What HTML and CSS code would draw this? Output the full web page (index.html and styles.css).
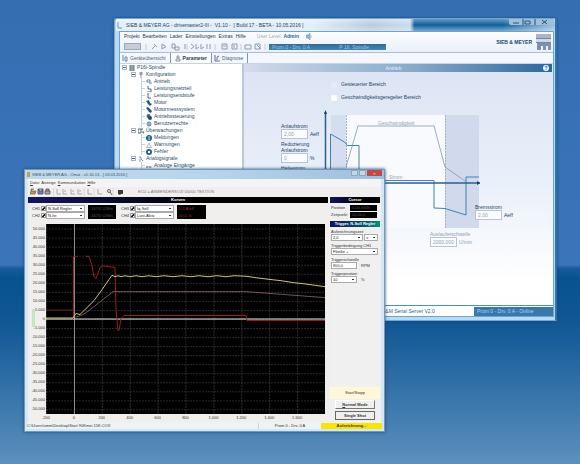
FILE: index.html
```html
<!DOCTYPE html>
<html lang="de">
<head>
<meta charset="utf-8">
<title>SIEB &amp; MEYER drivemaster2</title>
<link rel="stylesheet" href="styles.css">
</head>
<body>
<main class="desktop">

<section class="win back">
  <header class="back-title">
    <svg class="appicon" viewBox="0 0 6 8"><path d="M1 1v6h4" fill="none" stroke="#7796b5"/></svg>
    <h1>SIEB &amp; MEYER AG - drivemaster2-III - &nbsp;V1.10 - &nbsp;[ Build 17 - BETA - 10.05.2016 ]</h1>
    <svg class="back-controls" viewBox="0 0 46 7"><path d="M0 0H45V4Q45 6 42 6H3Q0 6 0 4Z" fill="#9fbfda"/><path d="M4 4h6M16 2h5v3h-5zM14 0v6M26 0v6M33 1l5 4M38 1l-5 4" fill="none" stroke="#24537d"/></svg>
  </header>
  <div class="back-client">
    <div class="back-head">
      <div class="head-left">
        <nav class="menu back-menu"><a href="#">Projekt</a><a href="#">Bearbeiten</a><a href="#">Lader</a><a href="#">Einstellungen</a><a href="#">Extras</a><a href="#">Hilfe</a><span class="level">User Level: <b>Admin</b></span>
          <svg class="sound" viewBox="0 0 6 7"><path d="M0 2h2l2-2v7L2 5H0zM5 2v3" fill="#91b3d0" stroke="#6590b7" stroke-width=".5"/></svg></nav>
        <div class="back-tools">
          <svg viewBox="0 0 142 9"><rect x=".5" y="1.5" width="16" height="6" fill="#c6ccd6" stroke="#9ba9b9"/><path d="M22 2v6M63 2v6M91 2v6M117 2v6M141 2v6" stroke="#c5d0df"/><g fill="none" stroke="#8c9caf"><path d="M28 7l3-3M30 2l3 3M38 2v5l4-2.500zM48 2h3v4h-3zM51 5h4v3h-4zM61 2v5M67 7l3-2.500L67 2M72 2v5l3-2M77 2v5l3-2M83 2v5M86 2v5" /><path d="M98 2h5v5h-5zM99 4h3M108 2h5v5h-5zM110 3v3M121 3h6v4h-6zM131 2h5v5h-5zM133 3l4 4"/></g></svg>
          <p class="connection"><span>Prom 0 - Drv. 0 A</span><span>P 16, Spindle</span></p>
        </div>
      </div>
      <strong class="brand">SIEB &amp; MEYER</strong>
      <svg class="logo" viewBox="0 0 15 17"><path d="M0 0h15v4H0z" fill="#a9b5cc"/><path d="M0 5h15v3H0z" fill="#d0d8e6"/><path d="M1 9h14v7h-3v-4h-2v4H7v-4H5v4H1z" fill="#7f8fae"/><path d="M0 4.500h15M0 8.500h15" stroke="#6f88aa"/></svg>
    </div>
    <nav class="tabs">
      <a href="#"><svg viewBox="0 0 6 7"><path d="M1 0v6M3 2h2v4H3z" fill="none" stroke="#6e88a2"/></svg>Geräteübersicht</a>
      <a href="#" class="active"><svg viewBox="0 0 6 7"><path d="M2 1h2v2H2zM1 4h4v2H1z" fill="none" stroke="#7f91a3"/></svg>Parameter</a>
      <a href="#"><svg viewBox="0 0 6 7"><path d="M1 0v6h5M3 5V2l2-1" fill="none" stroke="#596e91"/></svg>Diagnose</a>
    </nav>
    <div class="back-main">
      <ul class="tree">
        <li class="l0"><i class="box"></i><svg viewBox="0 0 6 6"><path d="M1 0h4v6H1zM1 2h4M1 4h4" fill="#bac5d1" stroke="#637b92"/></svg>P16i-Spindle</li>
        <li class="l1"><i class="box"></i><svg viewBox="0 0 6 6"><path d="M2 0h2v3H2zM3 4v2" fill="#a6b4bf" stroke="#8796a5"/></svg>Konfiguration</li>
        <li class="l2"><svg viewBox="0 0 6 6"><path d="M1 1h3v2H1zM3 4h3" fill="none" stroke="#668aa6"/></svg>Antrieb</li>
        <li class="l2"><svg viewBox="0 0 6 6"><path d="M2 0v3h3v3H1" fill="none" stroke="#436580"/></svg>Leistungsnetzteil</li>
        <li class="l2"><svg viewBox="0 0 6 6"><path d="M2 0v5h3" fill="none" stroke="#436580"/></svg>Leistungsendstufe</li>
        <li class="l2"><svg viewBox="0 0 6 6"><path d="M0 1l3-1 1 3 2 1-2 2-2-2z" fill="#1b5988"/></svg>Motor</li>
        <li class="l2"><svg viewBox="0 0 6 6"><path d="M0 1l2-1 4 4-1 2-2-1z" fill="#2b5775"/></svg>Motormesssystem</li>
        <li class="l2"><svg viewBox="0 0 6 6"><circle cx="2.500" cy="2" r="2" fill="#396b90"/><circle cx="4" cy="4" r="2" fill="#154f7d"/></svg>Antriebssteuerung</li>
        <li class="l2"><svg viewBox="0 0 6 6"><circle cx="3" cy="3" r="2" fill="#c6d9ea" stroke="#5c87aa"/><path d="M3 1v4" stroke="#5c87aa"/></svg>Benutzerrechte</li>
        <li class="l1"><i class="box"></i><svg viewBox="0 0 6 6"><path d="M0 1h3v4H0zM4 0v2M4 4h2v2" fill="none" stroke="#4f6370"/></svg>Überwachungen</li>
        <li class="l2"><svg viewBox="0 0 6 6"><circle cx="3" cy="3" r="3" fill="#1e629b"/><path d="M3 1v4" stroke="#cce2f2"/></svg>Meldungen</li>
        <li class="l2"><svg viewBox="0 0 6 6"><path d="M3 1l2.500 4.500h-5z" fill="#e8eef3" stroke="#8397a7" stroke-width=".6"/></svg>Warnungen</li>
        <li class="l2"><svg viewBox="0 0 6 6"><circle cx="3" cy="3" r="3" fill="#1e629b"/><path d="M2 2l2 2M4 2L2 4" stroke="#fff"/></svg>Fehler</li>
        <li class="l1"><i class="box"></i><svg viewBox="0 0 6 6"><path d="M1 1h2v2l2 2M2 3v3" fill="none" stroke="#8494a3"/></svg>Analogsignale</li>
        <li class="l2"><svg viewBox="0 0 6 6"><path d="M0 4h2M2.500 4h3" stroke="#435a6b"/></svg>Analoge Eingänge</li>
      </ul>
      <section class="panel">
        <h2 class="panel-title"><span>Antrieb</span><button type="button" aria-label="Hilfe">?</button></h2>
        <div class="canvas">
          <svg class="diagram" width="312" height="170" viewBox="0 0 312 170">
            <path d="M87 43h15v113H87z" fill="#d5def0"/><path d="M102 43h99v113h-99z" fill="#f8fafe"/><path d="M201 43h34v113h-34z" fill="#d0daec"/>
            <path d="M102.500 43v70M201.500 43v113" stroke="#a0b4c8" stroke-dasharray="2 1"/>
            <path d="M102 95l12-41h76l11 41 20 14" fill="none" stroke="#8299ad" stroke-width=".8"/>
            <path d="M86.500 110V62l14 8 3 3.500h11.500V108M140 108.500h50V136l11 .5 21 6.500v-38h13" fill="none" stroke="#4480ae"/>
            <path d="M81.500 40v72M81 111h155" stroke="#286090" stroke-width="1.500"/>
            <path d="M80 42l1.500-4L83 42zM233 109l3 2-3 2z" fill="#173f65"/>
          </svg>
          <span class="note speed">Geschwindigkeit</span><span class="note current">Strom</span>
          <label class="opt controlled"><input type="checkbox" class="ghost">Gesteuerter Bereich</label>
          <label class="opt regulated"><input type="checkbox">Geschwindigkeitsgeregelter Bereich</label>
          <div class="fields">
            <div class="field"><label for="start">Anlaufstrom</label><span><input id="start" value="2,00"><em>Aeff</em></span></div>
            <div class="field"><label for="reduce">Reduzierung<br>Anlaufstrom</label><span><input id="reduce" value="0"><em>%</em></span></div>
            <div class="field"><label for="hold">Haltestrom</label><span><input id="hold" value="1,00"></span></div>
          </div>
          <div class="field brake"><label for="brake">Bremsstrom</label><span><input id="brake" value="2,00"><em>Aeff</em></span></div>
          <div class="field coast"><label for="coast">Auslauferschwelle</label><span><input id="coast" value="2000.000"><em>U/min</em></span></div>
        </div>
      </section>
    </div>
    <footer class="back-status"><span>S&amp;M Serial Server V2.0</span><span class="online">Prom 0 - Drv. 0 A - Online</span></footer>
  </div>
</section>

<section class="win front">
  <header class="front-title"><i class="dot"></i><h1>SIEB &amp; MEYER AG - Omat - v1.10.13 - [ 03.03.2016 ]</h1>
    <span class="front-controls"><i></i><i></i><button type="button" aria-label="Schließen">×</button></span></header>
  <div class="front-client">
    <nav class="menu front-menu"><a href="#"><u>D</u>atei</a><a href="#">Anzeige</a><a href="#"><u>K</u>ommunikation</a><a href="#"><u>H</u>ilfe</a></nav>
    <div class="front-tools">
      <svg viewBox="0 0 94 8"><path d="M0 6l1-3h5L5 6zM1 3V1h3" fill="#b59b55" stroke="#665e41" stroke-width=".7"/><path d="M8 1h5v5H8zM9 1v2h3V1" fill="#7b859b" stroke="#3c4559" stroke-width=".8"/><path d="M15 3h5v3h-5zM16 3V1h3v2" fill="#a9a9a9" stroke="#4b4b4b" stroke-width=".8"/><path d="M23.500 0v8M54 0v8M64 0v8M83 0v8" stroke="#d8d8d8"/><path d="M27 1v5h4M33 1v5h4M35 2v2M41 1v5h4M43 2v2M48 1v5h4M50 2v2M58 1v5h4M68 1v5h4" fill="none" stroke="#aaa"/><circle cx="79" cy="3" r="1.500" fill="none" stroke="#646464"/><path d="M80 4l2 3" stroke="#646464"/><path d="M88 2h5v4h-2l-1 1-2-1z" fill="#393939"/></svg>
      <span>ECU = ANWENDERSOZI 00000 TEXTION</span>
    </div>
    <div class="work">
      <section class="plot-side">
        <h2 class="bar">Kurven</h2>
        <div class="channels">
          <div class="channel"><label for="s1">CH1</label><input type="checkbox" checked aria-label="CH1 anzeigen"><select id="s1"><option>N-Soll Regler</option></select><output>-167/0 U/Min</output></div>
          <div class="channel"><label for="s3">CH3</label><input type="checkbox" checked aria-label="CH3 anzeigen"><select id="s3"><option>Iq-Soll</option></select><output class="red">0,0 A/eff</output></div>
          <div class="channel"><label for="s2">CH2</label><input type="checkbox" checked aria-label="CH2 anzeigen"><select id="s2"><option>N-Ist</option></select><output>-167/0 U/Min</output></div>
          <div class="channel"><label for="s4">CH4</label><input type="checkbox" checked aria-label="CH4 anzeigen"><select id="s4"><option>Last-Aktiv</option></select><output class="red">00,0 %</output></div>
        </div>
        <div class="plot">
          <ol class="y-axis"><li>50.000</li><li>45.000</li><li>40.000</li><li>35.000</li><li>30.000</li><li>25.000</li><li>20.000</li><li>15.000</li><li>10.000</li><li>5.000</li><li>0</li><li>-5.000</li><li>-10.000</li><li>-15.000</li><li>-20.000</li><li>-25.000</li><li>-30.000</li><li>-35.000</li><li>-40.000</li><li>-45.000</li><li>-50.000</li></ol>
          <svg class="curves" viewBox="0 0 279 191" preserveAspectRatio="none">
            <defs><pattern id="h" width="279" height="9.090" y="4.600" patternUnits="userSpaceOnUse"><path d="M0 .5h279" stroke="#333" stroke-width=".8" stroke-dasharray="2 1"/></pattern><pattern id="v" width="27.900" height="191" patternUnits="userSpaceOnUse"><path d="M.5 0v191" stroke="#3a3a3a" stroke-width=".8" stroke-dasharray="2 1"/></pattern></defs>
            <path d="M0 0h279v191H0z" fill="#000"/><path d="M0 0h279v191H0z" fill="url(#h)"/><path d="M0 0h279v191H0z" fill="url(#v)"/>
            <path d="M28.500 0v191" stroke="#a9a9a9" stroke-width=".8"/><path d="M0 95.500h279" stroke="#eee"/>
            <g fill="none" stroke-linejoin="round"><path d="M0 86.500h27" stroke="#6b2119"/><path d="M27.500 95V32.500h4M40 32.500h3L46 42 48 53 50 55 54 44 56 42 67 43.500H69L70 86 72 107 73 107 75 95 78 92 80 92H200L201 97 204 97H279" stroke="#9b1f1f"/><path d="M28.500 94L37 91 43 87 53 79 67 68H200L279 74" stroke="#aa7774" stroke-width=".7"/><path d="M0 94.500H27L30 90 34 91 38 87 48 77 56 66 66 51.500 69 53 72 52 75 53 79 52 84 53 90 52 96 53 103 52 110 53 118 52 127 53 136 52 145 53 153 52 162 53 171 52 180 53 188 52 200 52.500 210 54 222 55.500 235 57 248 59 261 60.500 279 63" stroke="#cbc66f"/></g>
          </svg>
          <i class="marker"></i>
          <ol class="x-axis"><li>-200</li><li>0</li><li>200</li><li>400</li><li>600</li><li>800</li><li>1.000</li><li>1.200</li><li>1.400</li><li>1.600</li></ol>
        </div>
      </section>
      <aside class="side">
        <h2 class="bar">Cursor</h2>
        <dl class="cursor"><dt>Position</dt><dd>0,00,000h</dd><dt>Zeitpunkt</dt><dd>00:00,0</dd></dl>
        <h2 class="bar teal">Trigger, N-Soll Regler</h2>
        <form class="trigger">
          <label for="time">Aufzeichnungszeit</label><div class="pair"><select id="time"><option>2,0</option></select><select aria-label="Einheit"><option>s</option></select></div>
          <label for="cond">Triggerbedingung CH1</label><div><select id="cond" class="wide"><option>Flanke +</option></select></div>
          <label for="level">Triggerschwelle</label><div><input id="level" value="800,0"><em>RPM</em></div>
          <label for="pos">Triggerposition</label><div><select id="pos"><option>10</option></select><em>%</em></div>
        </form>
        <div class="start"><p>Start/Stopp</p><button type="button"><u>N</u>ormal Mode</button><button type="button" class="default">Single Shot</button></div>
      </aside>
    </div>
    <footer class="front-status"><span>C:\Users\smm\Desktop\Start 90Kmin 15K.COX</span><span>Prom 0 - Drv. 0 A</span><strong>Aufzeichnung...</strong></footer>
  </div>
</section>
</main>
</body>
</html>
```
FILE: styles.css
```css
* { box-sizing: border-box; }
body { margin: 0; font: 5px/7px "Liberation Sans", sans-serif; color: #234563; }
h1, h2, p, ul, ol, dl, dd { margin: 0; padding: 0; font: inherit; }
ul, ol { list-style: none; }
i, em { font-style: normal; }
a { color: inherit; text-decoration: none; }
svg { display: block; flex: none; }
input, select, button { font: inherit; color: inherit; margin: 0; padding: 0; border-radius: 0; appearance: none; min-width: 0; }
.desktop { position: relative; min-height: 100vh; overflow: hidden; background: linear-gradient(#356fb2 0, #3b74b9 57%, #155a9d 58%, #07528f 60%, #115895 70%, #5c90be 100%); }
.win { position: absolute; display: flex; flex-direction: column; }
.menu { display: flex; align-items: center; }

/* Parameter window */
.back { left: 114px; right: 23px; top: 18px; bottom: 143px; padding: 0 1px 3px 4px; background: #b9daf1; border: 1px solid #75a6cf; border-right: 2px solid #2c75b1; border-radius: 3px 3px 0 0; box-shadow: 0 0 3px #17497b; }
.back-title { display: flex; align-items: center; gap: 3px; height: 12px; margin: 0 -1px 0 -3px; padding-left: 1px; background: linear-gradient(#ffffff60, transparent 50%, #e3effa80), linear-gradient(90deg, #e2eef8 0 45%, #b7cbe0 58%, #c9dbec 67%, #0e609b 68% 88%, #9dbfd9 100%); }
.back-title h1 { flex: 1; font-size: 5px; white-space: nowrap; }
.appicon { width: 6px; height: 8px; }
.back-controls { width: 46px; height: 7px; align-self: flex-start; }
.back-client { flex: 1; min-height: 0; display: flex; flex-direction: column; background: #f4f7fd; border: 1px solid #6da5cc; }
.back-head { display: flex; align-items: center; height: 21px; padding-left: 4px; background: linear-gradient(#fbfcff, #eaf0fa); border-bottom: 1px solid #aabfd4; }
.head-left { flex: 1; }
.back-menu { gap: 3px; height: 9px; font-size: 5px; color: #1f3a52; }
.level { margin-left: 8px; color: #a1adbd; }
.level b { color: #32699b; }
.sound { width: 6px; height: 7px; margin-left: 4px; }
.back-tools { display: flex; align-items: center; gap: 3px; height: 11px; }
.back-tools > svg { width: 142px; height: 9px; }
.connection { display: flex; width: 117px; height: 6px; padding: 0 3px; justify-content: space-between; line-height: 6px; color: #9dc3e3; background: linear-gradient(#2d6b9d, #4785b4); }
.connection span:last-child { margin-right: 14px; }
.brand { margin-right: 4px; font-size: 5px; color: #124b73; }
.logo { width: 15px; height: 17px; margin-right: 2px; }
.tabs { display: flex; height: 11px; align-items: center; color: #48647c; border-bottom: 1px solid #c5d4e3; }
.tabs a { display: flex; align-items: center; gap: 2px; height: 10px; padding: 0 4px 0 2px; border-right: 1px solid #7c99b1; }
.tabs svg { width: 6px; height: 7px; }
.tabs .active { font-weight: bold; color: #193f60; padding: 0 4px; background: #fff; }
.back-main { flex: 1; min-height: 0; display: grid; grid-template-columns: 124px 1fr; overflow: hidden; }
.tree { background: #fff; border-right: 2px solid #b8c8de; font-size: 5px; line-height: 7px; color: #264c6b; }
.tree li { display: flex; align-items: center; gap: 2px; height: 7px; white-space: nowrap; }
.tree svg { width: 6px; height: 6px; }
.tree .l0 { padding-left: 2px; }
.tree .l1 { padding-left: 11px; }
.tree .l2 { padding-left: 26px; background: linear-gradient(#c6d2dd, #c6d2dd) 21px 3px / 4px 1px no-repeat, linear-gradient(#c6d2dd, #c6d2dd) 21px 0 / 1px 7px no-repeat; }
.box { width: 5px; height: 5px; border: 1px solid #a3b6c7; background: linear-gradient(#536f88, #536f88) center / 3px 1px no-repeat; }
.panel { display: flex; flex-direction: column; min-width: 0; background: linear-gradient(#dce3f3, #eaf0fa 50%, #fff 90%); }
.panel-title { display: flex; align-items: center; height: 8px; margin-right: 1px; padding-right: 3px; color: #e6f0fa; background: linear-gradient(90deg, #d2dbea, #88a9ca 55%, #2e679b); }
.panel-title span { flex: 1; text-align: center; }
.panel-title button { width: 6px; height: 6px; border: 0; border-radius: 50%; background: #eef6ff; color: #295a87; font-weight: bold; line-height: 6px; }
.canvas { position: relative; flex: 1; }
.note, .opt, .fields, .brake, .coast { position: absolute; white-space: nowrap; }
.note { color: #93a6ba; line-height: 6px; }
.speed { left: 134px; top: 48px; }
.current { left: 145px; top: 102px; }
.opt { display: flex; align-items: center; gap: 4px; left: 87px; }
.opt input { width: 6px; height: 6px; background: #fff; border: 1px solid #f6faff; }
.opt .ghost { background: #e7edf8; border-color: #e2e8f5; }
.controlled { top: 9px; }
.regulated { top: 22px; }
.fields { left: 37px; top: 51px; display: grid; gap: 2px; }
.field { line-height: 6px; }
.field label { display: block; }
.field span { display: flex; align-items: center; gap: 2px; }
.field input { width: 27px; height: 10px; padding: 0 2px; color: #93a1b3; background: #fafcff; border: 1px solid #b7c4d7; }
.brake { left: 231px; top: 132px; }
.coast { left: 186px; top: 159px; color: #8da2b7; }
.back-status { display: flex; height: 11px; padding-top: 1px; line-height: 9px; font-size: 5px; color: #28689d; background: #fff; border-top: 1px solid #4f8dbe; }
.back-status span:first-child { flex: 1; padding-left: 262px; white-space: nowrap; }
.back-status .online { width: 79px; padding-left: 3px; color: #afd3ed; background: #3978ac; white-space: nowrap; }

/* Oscilloscope window */
.front { left: 24px; right: 195px; top: 169px; bottom: 32px; padding: 0 3px 2px; font: 4px/6px "Liberation Sans Narrow", "Liberation Sans", sans-serif; color: #333; background: #d3e7f5; border: 1px solid #7399b8; box-shadow: 0 0 3px #21496c; }
.front-title { display: flex; align-items: center; gap: 2px; height: 9px; margin: 0 -3px; padding: 0 2px; background: linear-gradient(90deg, #c1d9ea, #b8d4ed 50%, #a0bfdb); }
.front-title h1 { flex: 1; line-height: 8px; color: #34516d; white-space: nowrap; }
.dot { width: 3px; height: 5px; background: #c79f45; }
.front-controls { display: flex; align-self: flex-start; height: 6px; gap: 1px; }
.front-controls i { width: 7px; border: 1px solid #90a7bc; background: #c6d6e3; }
.front-controls button { width: 15px; border: 0; line-height: 5px; color: #fff; background: #bf4b49; }
.front-client { flex: 1; display: flex; flex-direction: column; min-height: 0; background: #f1efee; }
.front-menu { height: 8px; gap: 2px; padding-left: 2px; background: #f5f4f5; }
.front-tools { display: flex; align-items: center; gap: 14px; height: 9px; padding-left: 2px; color: #777; white-space: nowrap; }
.front-tools svg { width: 94px; height: 8px; }
.work { flex: 1; display: grid; grid-template-columns: 1fr 51px; gap: 2px; padding-top: 1px; min-height: 0; }
.bar { height: 6px; font-weight: bold; line-height: 6px; text-align: center; color: #fff; background: linear-gradient(90deg, #15155f, #000 55%); white-space: nowrap; }
.bar.teal { background: linear-gradient(90deg, #11115b, #064b67 60%, #079080); }
.plot-side { display: flex; flex-direction: column; min-height: 0; }
.channels { display: grid; grid-template-columns: 84px 85px; gap: 0 5px; height: 21px; padding: 2px 0 5px 4px; }
.channel { display: flex; align-items: center; height: 7px; }
.channel label { width: 9px; }
.channel input { width: 5px; height: 5px; border: 1px solid #999; background: linear-gradient(135deg, #fff 30%, #222 40% 70%, #fff 80%); }
.channel output { flex: 1; height: 7px; margin-left: 3px; padding-left: 2px; background: #000; color: #555; line-height: 7px; white-space: nowrap; overflow: hidden; }
.channel .red { color: #8b3430; }
select { height: 7px; padding: 0 6px 0 1px; border: 1px solid #aaa; color: #222; background: linear-gradient(#333, #333) right 2px center / 2px 1px no-repeat, #fff; }
.channel select { width: 39px; line-height: 5px; }
.plot { flex: 1; display: grid; grid-template: minmax(0, 1fr) 8px / 18px 1fr; position: relative; min-height: 0; margin-right: 3px; }
.y-axis { display: flex; flex-direction: column; padding-right: 1px; text-align: right; }
.y-axis li { flex: 1; display: flex; align-items: center; justify-content: flex-end; }
.curves { width: 100%; height: 100%; }
.marker { position: absolute; left: 4px; top: 43%; width: 3px; height: 9%; background: #a8d69c; opacity: .5; }
.x-axis { grid-column: 1 / -1; display: flex; margin: 0 14px 0 4px; text-align: center; line-height: 7px; }
.x-axis li { flex: 1; }
.side { display: flex; flex-direction: column; min-width: 0; background: #f0f0f1; padding-right: 1px; }
.cursor { display: grid; grid-template-columns: 1fr 27px; row-gap: 1px; margin: 2px 3px 2px 1px; line-height: 6px; }
.cursor dd { height: 6px; padding-left: 2px; color: #555; background: #000; }
.teal { margin-top: 1px; }
.trigger { padding: 2px 2px 0 1px; }
.trigger label { display: block; height: 5px; line-height: 5px; white-space: nowrap; }
.trigger div { display: flex; align-items: center; gap: 4px; height: 7px; margin-bottom: 2px; }
.trigger .pair { gap: 1px; }
.trigger input, .trigger select { width: 26px; height: 7px; padding-left: 1px; border: 1px solid #aaa; background-color: #fff; }
.trigger .pair select:first-child { flex: 1; }
.trigger .pair select:last-child { width: 14px; }
.trigger .wide { width: 100%; }
.start { display: grid; gap: 2px; margin-top: auto; padding: 2px 5px; background: linear-gradient(#fff8d8 0 12px, #f0f0f1 12px); text-align: center; }
.start p { height: 9px; line-height: 7px; }
.start button { height: 9px; border: 1px solid; border-color: #fff #777 #777 #fff; background: #efeff0; font-weight: bold; line-height: 7px; }
.start .default { border-color: #666; }
.front-status { display: flex; align-items: center; height: 7px; margin: 0 -1px; background: #edf2f5; white-space: nowrap; }
.front-status span:first-child { flex: 1; }
.front-status span:nth-child(2) { width: 63px; text-align: center; border-left: 1px solid #ccd2d5; }
.front-status strong { width: 61px; text-align: center; background: #f8e30b; }
```
